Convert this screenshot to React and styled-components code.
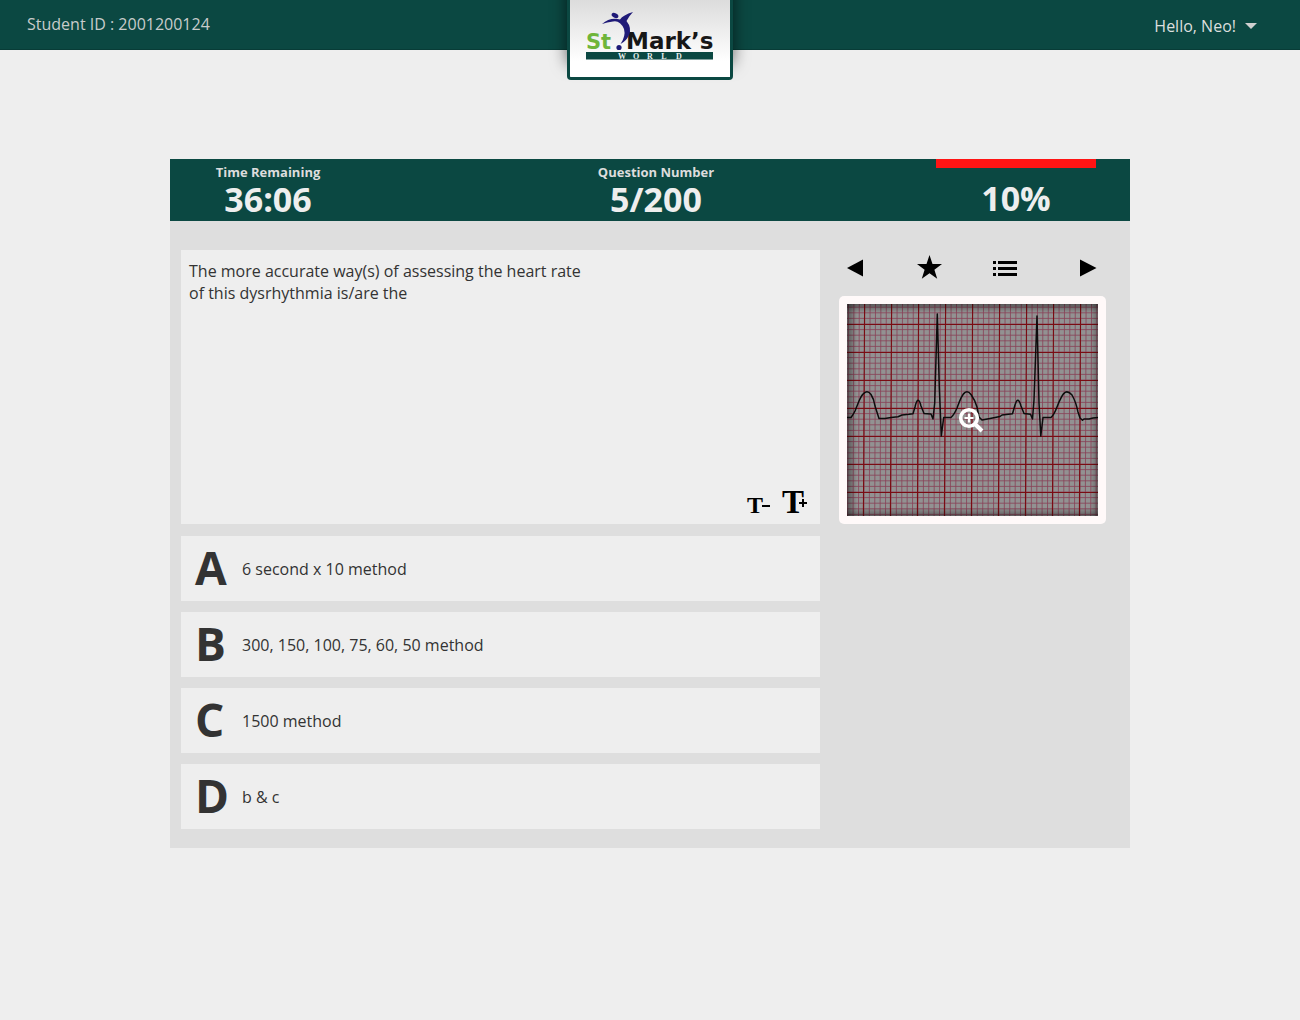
import React, { useState } from "react";
import styled, { createGlobalStyle } from "styled-components";

const GlobalStyle = createGlobalStyle`
  *, *::before, *::after { box-sizing: border-box; }
  body {
    margin: 0;
    min-height: 100vh;
    background: #eeeeee;
    color: #333333;
    font-family: "Open Sans", "Noto Sans", sans-serif;
    font-size: 16px;
    line-height: 22px;
  }
`;

const PlainButton = styled.button`
  margin: 0;
  padding: 0;
  border: 0;
  background: none;
  color: inherit;
  font: inherit;
  cursor: pointer;
`;

const TopBar = styled.header`
  display: grid;
  grid-template-columns: 1fr 166px 1fr;
  align-items: start;
  height: 50px;
  background: #0b4842;
  border-bottom: 1px solid #083c37;
`;

const StudentId = styled.p`
  margin: 0;
  padding: 13px 27px;
  color: #c8cccb;
`;

const UserMenu = styled(PlainButton)`
  display: flex;
  align-items: center;
  justify-self: end;
  gap: 9px;
  padding: 15px 43px 0 0;
  color: #dcdfde;
`;

const LogoTab = styled.a`
  display: flex;
  justify-content: center;
  height: 80px;
  padding-top: 11px;
  border: 3px solid #0b4842;
  border-top: 0;
  border-radius: 0 0 4px 4px;
  background: linear-gradient(#dcdcdc, #ffffff 80%);
  box-shadow: 0 -16px 16px rgba(0, 0, 0, 0.6);
`;

const Page = styled.main`
  padding: 109px 20px 40px;
`;

const Panel = styled.section`
  max-width: 960px;
  margin: 0 auto;
  background: #dedede;
`;

const StatusBar = styled.div`
  display: grid;
  grid-template-columns: 160px 1fr 160px;
  height: 62px;
  padding: 0 34px 0 18px;
  background: #0b4842;
  color: #eeeeee;
  text-align: center;
`;

const Stat = styled.div`
  padding-top: 4px;
  padding-left: ${(p) => p.$shift || 0};
`;

const StatLabel = styled.div`
  color: #dddddd;
  font-size: 13px;
  font-weight: 700;
  line-height: 18px;
`;

const StatValue = styled.div`
  font-size: 34px;
  font-weight: 700;
  line-height: 36px;
`;

const Score = styled.div`
  display: flex;
  flex-direction: column;
  gap: 12px;
`;

const ScoreBar = styled.div`
  height: 9px;
  background: #ff1414;
`;

const PanelBody = styled.div`
  display: grid;
  grid-template-columns: minmax(0, 1fr) 267px;
  gap: 19px;
  padding: 29px 24px 19px 11px;
`;

const Question = styled.div`
  display: flex;
  flex-direction: column;
  justify-content: space-between;
  min-height: 274px;
  padding: 10px 13px 4px 8px;
  margin-bottom: 12px;
  background: #eeeeee;
`;

const QuestionText = styled.p`
  max-width: 410px;
  margin: 0;
`;

const TextTools = styled.div`
  display: flex;
  justify-content: flex-end;
  align-items: baseline;
  gap: 12px;
`;

const SizeButton = styled(PlainButton)`
  color: #000000;
  font-family: "Liberation Serif", serif;
  font-size: ${(p) => p.$size};
  font-weight: 700;
  line-height: 30px;
`;

const SizeSign = styled.svg`
  margin-left: ${(p) => p.$tuck || 0};
  vertical-align: ${(p) => p.$rise};
`;

const Answers = styled.div`
  display: flex;
  flex-direction: column;
  gap: 11px;
`;

const Answer = styled(PlainButton)`
  display: grid;
  grid-template-columns: 47px 1fr;
  align-items: center;
  height: 65px;
  padding: 0 14px;
  background: #eeeeee;
  text-align: left;
`;

const Letter = styled.span`
  padding-bottom: 4px;
  font-size: 46px;
  font-weight: 700;
  line-height: 50px;
`;

const Side = styled.aside`
  display: flex;
  flex-direction: column;
`;

const Tools = styled.nav`
  display: grid;
  grid-template-columns: 70px 76px 1fr 18px;
  align-items: center;
  height: 46px;
  padding: 0 8px 10px;
`;

const ToolButton = styled(PlainButton)`
  display: flex;
  color: #000000;
`;

const Strip = styled(PlainButton)`
  display: grid;
  place-items: center;
  padding: 8px;
  border-radius: 5px;
  background: #fff9f9;

  > svg { grid-area: 1 / 1; }
`;

const majorX = [17, 44, 71, 98, 125, 152, 179, 206, 233];
const majorY = [20, 48, 76, 104, 132, 160, 188];
const minorX = Array.from({ length: 47 }, (_, i) => 1 + i * 5.4);
const minorY = Array.from({ length: 38 }, (_, i) => 3.2 + i * 5.6);

const trace =
  "M0 113.5H4Q6 111 8 107L12 97Q15 90 18 88.5Q21 86.500 24 90.500Q27 95 28 102L32 114.500L38 114.500L44 113.500L51 112.700L55 111L62 110.300L66 109.700L68 103Q71 90 74 102L77 109.500L84 110L86 115L87.700 99L90.300 10L92.300 83L94.300 132L96.700 113.500H104Q107 111 110 104Q115 90 118 88.500Q121 86.500 124 90.500Q128 96 130 103L132 113L135 116L143 114.500L153 112.500L155 111L165.500 109.700L168 101Q171 91 174 102L177 109.500L183.500 110.200L185.500 115L187 96L190 12L192 99L193.800 132L196 113.500H204Q207 111 210 103Q215 90 218 88.500Q221 86.500 225 91Q229 98 231 108L233 114L235.500 116.300L237 115L242 115L246 114L251 113.500";

function EcgStrip() {
  return (
    <svg width="251" height="212" viewBox="0 0 251 212" role="img" aria-label="ECG strip">
      <defs>
        <linearGradient id="edgeV" x1="0" y1="0" x2="0" y2="1">
          <stop offset="0" stopColor="#000" stopOpacity="0.4" />
          <stop offset="0.04" stopColor="#000" stopOpacity="0" />
          <stop offset="0.96" stopColor="#000" stopOpacity="0" />
          <stop offset="1" stopColor="#000" stopOpacity="0.35" />
        </linearGradient>
        <linearGradient id="edgeH">
          <stop offset="0" stopColor="#000" stopOpacity="0.4" />
          <stop offset="0.04" stopColor="#000" stopOpacity="0" />
          <stop offset="0.97" stopColor="#000" stopOpacity="0" />
          <stop offset="1" stopColor="#000" stopOpacity="0.3" />
        </linearGradient>
      </defs>
      <rect width="251" height="212" fill="#929292" />
      <g stroke="#86203f" strokeWidth="0.8" opacity="0.7">
        {minorX.map((x) => (
          <path key={x} d={`M${x + 0.5} 0L${x - 0.3} 212`} />
        ))}
        {minorY.map((y) => (
          <path key={y} d={`M0 ${y}H251`} />
        ))}
      </g>
      <g stroke="#7a0c12" strokeWidth="1.1">
        {majorX.map((x) => (
          <path key={x} d={`M${x + 0.6} 0L${x - 0.6} 212`} />
        ))}
        {majorY.map((y) => (
          <path key={y} d={`M0 ${y + 0.5}H251`} />
        ))}
      </g>
      <path d={trace} fill="none" stroke="#0c0c0c" strokeWidth="1.5" strokeLinejoin="round" />
      <rect width="251" height="212" fill="url(#edgeV)" />
      <rect width="251" height="212" fill="url(#edgeH)" />
    </svg>
  );
}

function ZoomIcon() {
  return (
    <svg width="30" height="46" viewBox="0 0 30 46" aria-hidden="true" fill="none" stroke="#fff">
      <circle cx="11" cy="31" r="8.300" strokeWidth="3.600" />
      <path d="M11 26.500V35.500M6.500 31H15.500" strokeWidth="2.200" />
      <path d="M17 37L24 44" strokeWidth="4" />
    </svg>
  );
}

function Logo() {
  return (
    <svg width="128" height="50" viewBox="0 0 128 50" role="img" aria-label="St. Mark's World">
      <g fontFamily="'DejaVu Sans', sans-serif" fontWeight="700">
        <text x="0" y="38" fontSize="21" fill="#6fb53a">St</text>
        <text x="40" y="38" fontSize="23" fill="#171717">Mark’s</text>
      </g>
      <g fill="#1f1a78">
        <circle cx="33" cy="36.500" r="2.600" />
        <path d="M16 13Q24 6 34 8.500Q37 4 47 1Q43 5 40.500 10Q46 17 43 24Q40.500 30 34.500 33Q40 25 38 18Q34 9 27 10.500Q21 11 16 13Z" />
        <ellipse cx="29" cy="4.500" rx="3.600" ry="2.300" transform="rotate(28 29 4.500)" />
      </g>
      <rect x="0" y="41" width="127" height="7.500" fill="#0b4842" />
      <text
        x="36 50 64 78 93"
        y="47.500"
        textAnchor="middle"
        fill="#e8efee"
        fontFamily="'Liberation Serif', serif"
        fontWeight="700"
        fontSize="8"
      >
        WORLD
      </text>
    </svg>
  );
}

const answers = [
  ["A", "6 second x 10 method"],
  ["B", "300, 150, 100, 75, 60, 50 method"],
  ["C", "1500 method"],
  ["D", "b & c"],
];

export default function App() {
  const [picked, setPicked] = useState(null);

  return (
    <>
      <GlobalStyle />
      <TopBar>
        <StudentId>Student ID : 2001200124</StudentId>
        <LogoTab href="#home">
          <Logo />
        </LogoTab>
        <UserMenu type="button" aria-haspopup="menu">
          Hello, Neo!
          <svg width="12" height="6" viewBox="0 0 12 6" aria-hidden="true">
            <path d="M0 0H12L6 6Z" fill="#d0d0d0" />
          </svg>
        </UserMenu>
      </TopBar>
      <Page>
        <Panel>
          <StatusBar>
            <Stat>
              <StatLabel>Time Remaining</StatLabel>
              <StatValue>36:06</StatValue>
            </Stat>
            <Stat $shift="28px">
              <StatLabel>Question Number</StatLabel>
              <StatValue>5/200</StatValue>
            </Stat>
            <Score>
              <ScoreBar />
              <StatValue>10%</StatValue>
            </Score>
          </StatusBar>
          <PanelBody>
            <div>
              <Question>
                <QuestionText>
                  The more accurate way(s) of assessing the heart rate
                  <br />
                  of this dysrhythmia is/are the
                </QuestionText>
                <TextTools>
                  <SizeButton type="button" $size="24px" aria-label="T smaller text">
                    T
                    <SizeSign $tuck="-1px" $rise="5px" width="8" height="4" viewBox="0 0 8 4">
                      <path d="M0 1H8V3H0Z" />
                    </SizeSign>
                  </SizeButton>
                  <SizeButton type="button" $size="33px" aria-label="T larger text">
                    T
                    <SizeSign $tuck="-5px" $rise="6px" width="8" height="8" viewBox="0 0 8 8">
                      <path d="M3 0H5V3H8V5H5V8H3V5H0V3H3Z" />
                    </SizeSign>
                  </SizeButton>
                </TextTools>
              </Question>
              <Answers>
                {answers.map(([letter, text]) => (
                  <Answer
                    key={letter}
                    type="button"
                    aria-pressed={picked === letter}
                    onClick={() => setPicked(letter)}
                  >
                    <Letter>{letter}</Letter>
                    <span>{text}</span>
                  </Answer>
                ))}
              </Answers>
            </div>
            <Side>
              <Tools aria-label="Question tools">
                <ToolButton type="button" aria-label="Previous question">
                  <svg width="17" height="18" viewBox="0 0 17 18">
                    <path d="M16 0.500V17.500L0 9Z" />
                  </svg>
                </ToolButton>
                <ToolButton type="button" aria-label="Bookmark question">
                  <svg width="25" height="26" viewBox="0 0 25 26">
                    <path d="M12.500 0L15.500 8.900L25 9L17.400 14.700L20.200 23.700L12.500 18.300L4.800 23.700L7.600 14.700L0 9L9.500 8.900Z" />
                  </svg>
                </ToolButton>
                <ToolButton type="button" aria-label="Question list">
                  <svg width="24" height="16" viewBox="0 0 24 16">
                    <path d="M0 1H3V4H0ZM5 1H24V4H5ZM0 7H3V10H0ZM5 7H24V10H5ZM0 13H3V16H0ZM5 13H24V16H5Z" />
                  </svg>
                </ToolButton>
                <ToolButton type="button" aria-label="Next question">
                  <svg width="17" height="18" viewBox="0 0 17 18">
                    <path d="M0 0.500V17.500L16.500 9Z" />
                  </svg>
                </ToolButton>
              </Tools>
              <Strip type="button" aria-label="Enlarge ECG strip">
                <EcgStrip />
                <ZoomIcon />
              </Strip>
            </Side>
          </PanelBody>
        </Panel>
      </Page>
    </>
  );
}
